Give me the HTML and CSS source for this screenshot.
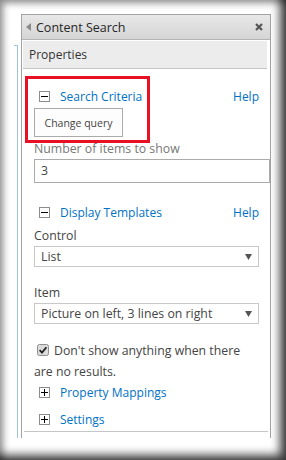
FILE: index.html
```html
<!DOCTYPE html>
<html lang="en">
<head>
    <meta charset="UTF-8">
    <meta name="viewport" content="width=device-width, initial-scale=1.0">
    <title>Content Search</title>
    <link rel="stylesheet" href="styles.css">
</head>
<body>
    <div class="frame">
        <div class="stage">
            <div class="rail"></div>

            <div class="panel">
                <div class="panel-head">
                    <svg class="head-arrow" width="5" height="8" viewBox="0 0 5 8"><path d="M5 0 L0 4 L5 8 Z" fill="#8a8a8a"/></svg>
                    <span class="head-title">Content Search</span>
                    <svg class="head-close" width="8" height="8" viewBox="0 0 8 8"><path d="M1 1 L7 7 M7 1 L1 7" stroke="#555" stroke-width="2.2"/></svg>
                </div>

                <div class="props">Properties</div>

                <div class="panel-body">
                    <!-- red annotation box drawn over the first section -->
                    <div class="callout"></div>

                    <div class="section-head">
                        <span class="toggle"><svg width="7" height="7" viewBox="0 0 7 7"><path d="M0 3.5 H7" stroke="#000" stroke-width="1"/></svg></span>
                        <a class="section-link">Search Criteria</a>
                        <a class="help-link">Help</a>
                    </div>
                    <button class="query-btn" type="button">Change query</button>

                    <div class="field-label count-label">Number of items to show</div>
                    <div class="text-input">3</div>

                    <div class="section-head second">
                        <span class="toggle"><svg width="7" height="7" viewBox="0 0 7 7"><path d="M0 3.5 H7" stroke="#000" stroke-width="1"/></svg></span>
                        <a class="section-link">Display Templates</a>
                        <a class="help-link">Help</a>
                    </div>

                    <div class="field-label dark">Control</div>
                    <div class="select">
                        <span>List</span>
                        <svg width="7" height="6" viewBox="0 0 7 6"><path d="M0 0 H7 L3.5 6 Z" fill="#555"/></svg>
                    </div>

                    <div class="field-label dark item-label">Item</div>
                    <div class="select">
                        <span>Picture on left, 3 lines on right</span>
                        <svg width="7" height="6" viewBox="0 0 7 6"><path d="M0 0 H7 L3.5 6 Z" fill="#555"/></svg>
                    </div>

                    <div class="check-row">
                        <span class="check"><svg width="12" height="12" viewBox="0 0 12 12"><rect x="0.5" y="0.5" width="11" height="11" rx="2" fill="#dcdcdc" stroke="#8e8e8e"/><path d="M2.6 6.2 L5 8.6 L9.4 3.2" fill="none" stroke="#222" stroke-width="1.8"/></svg></span>Don't show anything when there are no results.
                    </div>

                    <div class="section-head collapsed">
                        <span class="toggle"><svg width="7" height="7" viewBox="0 0 7 7"><path d="M0 3.5 H7 M3.5 0 V7" stroke="#000" stroke-width="1"/></svg></span>
                        <a class="section-link">Property Mappings</a>
                    </div>
                    <div class="section-head collapsed last">
                        <span class="toggle"><svg width="7" height="7" viewBox="0 0 7 7"><path d="M0 3.5 H7 M3.5 0 V7" stroke="#000" stroke-width="1"/></svg></span>
                        <a class="section-link">Settings</a>
                    </div>

                    <div class="panel-foot"></div>
                </div>
            </div>
        </div>
    </div>
</body>
</html>
```

FILE: styles.css
```css
* {
    margin: 0;
    padding: 0;
    box-sizing: border-box;
}

body {
    background: #fff;
    font-family: 'Open Sans', sans-serif;
    color: #444;
}

.frame {
    position: relative;
    width: 286px;
    height: 460px;
    background: #fff;
    overflow: hidden;
}

/* screenshot drop shadow round the edges */
.frame::after {
    content: "";
    position: absolute;
    inset: 0;
    pointer-events: none;
    box-shadow: inset 3px 3px 7px rgba(0, 0, 0, 0.45),
                inset -8px -7px 10px -2px rgba(0, 0, 0, 0.75);
}

.stage {
    display: flex;
    height: 438px;
    padding: 14px 0 0 14px;
    overflow: hidden;
}

.rail {
    width: 4px;
    margin-top: 31px;
    margin-right: 3px;
    border-top: 1px solid #9fc4e2;
    border-right: 1px solid #9fc4e2;
}

.panel {
    width: 250px;
    border: 1px solid #a3a3a3;
    border-bottom: none;
    background: #fff;
}

.panel-head {
    display: flex;
    align-items: center;
    height: 25px;
    padding: 0 7px 0 4px;
    background: linear-gradient(#e8e8e8, #d5d5d5);
    border-bottom: 1px solid #b4b4b4;
}

.head-arrow {
    margin-right: 5px;
}

.head-title {
    flex: 1;
    font-size: 12.5px;
    color: #262626;
}

.props {
    height: 28px;
    margin: 1px 3px 0 1px;
    padding: 5px 0 0 6px;
    background: #ececec;
    border-bottom: 1px solid #c6c6c6;
    font-size: 12px;
    color: #333;
}

.panel-body {
    position: relative;
    padding: 17px 11px 0 12px;
}

.callout {
    position: absolute;
    left: 3px;
    top: 7px;
    width: 125px;
    height: 67px;
    border: 3px solid #e81123;
}

.section-head {
    display: flex;
    align-items: center;
    height: 20px;
    font-size: 12px;
}

.section-head.second {
    margin-top: 19px;
}

.section-head.last {
    margin-top: 7px;
}

.toggle {
    display: flex;
    align-items: center;
    justify-content: center;
    width: 11px;
    height: 11px;
    margin: 0 10px 0 5px;
    border: 1px solid #8c8c8c;
    background: #fff;
}

.section-link {
    flex: 1;
    color: #0072c6;
}

.help-link {
    color: #0072c6;
}

.query-btn {
    margin-top: 2px;
    width: 89px;
    height: 29px;
    border: 1px solid #ababab;
    background: #fdfdfd;
    font-family: 'Open Sans', sans-serif;
    font-size: 10.5px;
    color: #444;
}

.field-label {
    height: 20px;
    line-height: 20px;
    font-size: 12.3px;
    color: #777;
}

.field-label.count-label {
    margin-top: 2px;
}

.field-label.dark {
    margin-top: 4px;
    color: #444;
}

.field-label.item-label {
    margin-top: 16px;
}

.text-input {
    height: 24px;
    margin-right: -11px;
    padding-left: 6px;
    line-height: 22px;
    border: 1px solid #ababab;
    font-size: 12.3px;
    color: #444;
}

.select {
    display: flex;
    align-items: center;
    justify-content: space-between;
    height: 21px;
    padding: 0 6px 0 6px;
    border: 1px solid #c8c8c8;
    font-size: 12.3px;
    color: #444;
}

.check-row {
    width: 212px;
    margin-top: 16px;
    line-height: 21px;
    font-size: 12.3px;
    color: #444;
}

.check {
    display: inline-block;
    vertical-align: -1px;
    margin: 0 5px 0 3px;
}

.check svg {
    display: block;
}

.panel-foot {
    margin: 2px -9px 0 -10px;
    border-top: 1px solid #c6c6c6;
}
```
